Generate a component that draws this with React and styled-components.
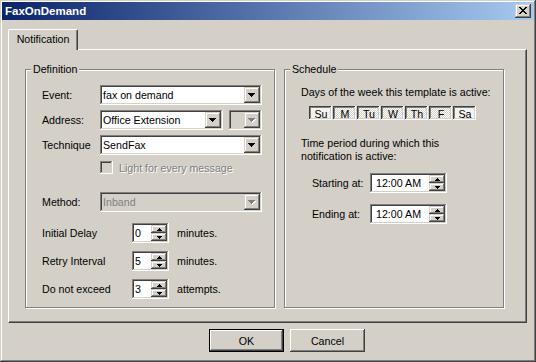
import React from 'react';
import styled, { createGlobalStyle, css } from 'styled-components';

const GlobalStyle = createGlobalStyle`
  html, body { margin: 0; padding: 0; background: #d4d0c8; }
  body {
    font-family: "Liberation Sans", Arial, sans-serif;
    font-size: 8pt;
    color: #000;
  }
  * { box-sizing: border-box; }
`;

// classic 3D edges
const raised = css`
  box-shadow: inset -1px -1px #404040, inset 1px 1px #d4d0c8, inset -2px -2px #808080, inset 2px 2px #fff;
`;

const pushRaised = css`
  box-shadow: inset -1px -1px #404040, inset 1px 1px #fff, inset -2px -2px #808080;
`;

const sunken = css`
  box-shadow: inset -1px -1px #fff, inset 1px 1px #808080, inset -2px -2px #d4d0c8, inset 2px 2px #404040;
`;

const Window = styled.div`
  width: 536px;
  height: 362px;
  padding: 2px;
  display: flex;
  flex-direction: column;
  background: #d4d0c8;
  box-shadow: inset -1px -1px #404040, inset 1px 1px #d4d0c8, inset -2px -2px #808080, inset 2px 2px #fff;
`;

const TitleBar = styled.div`
  height: 18px;
  flex-shrink: 0;
  display: flex;
  align-items: center;
  justify-content: space-between;
  padding: 0 3px 0 3px;
  background: linear-gradient(to right, #0a246a, #a6caf0);
`;

const Caption = styled.span`
  color: #fff;
  font-weight: bold;
  font-size: 11.5px;
`;

const CaptionButton = styled.div`
  width: 16px;
  height: 14px;
  background: #d4d0c8;
  display: flex;
  align-items: center;
  justify-content: center;
  padding: 0 1px 1px 0;
  ${raised}
`;

const Body = styled.div`
  flex: 1;
  padding: 9px 7px 0 6px;
  display: flex;
  flex-direction: column;
`;

const TabStrip = styled.div`
  display: flex;
`;

const Tab = styled.div`
  position: relative;
  z-index: 1;
  width: 70px;
  height: 21px;
  margin-bottom: -1px;
  padding-bottom: 2px;
  background: #d4d0c8;
  border-top: 1px solid #fff;
  border-left: 1px solid #fff;
  border-right: 1px solid #404040;
  border-radius: 2px 2px 0 0;
  box-shadow: inset -1px 0 #808080;
  display: flex;
  align-items: center;
  justify-content: center;
`;

const TabPanel = styled.div`
  height: 274px;
  border-top: 1px solid #fff;
  border-left: 1px solid #fff;
  border-right: 1px solid #404040;
  border-bottom: 1px solid #404040;
  box-shadow: inset -1px -1px #808080;
  padding: 19px 0 0 16px;
  display: flex;
  gap: 9px;
  align-items: flex-start;
`;

const GroupBox = styled.div`
  width: ${p => p.$w}px;
  height: 239px;
  border: 1px solid #808080;
  box-shadow: inset 1px 1px #fff, 1px 1px #fff;
  padding: 0 0 0 16px;
  display: flex;
  flex-direction: column;
  align-items: flex-start;
`;

const Legend = styled.div`
  margin: -7px 0 0 -11px;
  padding: 0 2px;
  line-height: 13px;
  background: #d4d0c8;
`;

const Row = styled.div`
  display: flex;
  align-items: center;
  height: ${p => p.$h || 20}px;
  margin-top: ${p => p.$mt}px;
  margin-left: ${p => p.$ml || 0}px;
`;

const Label = styled.span`
  width: ${p => p.$w}px;
  flex-shrink: 0;
  white-space: nowrap;
`;

const Combo = styled.div`
  width: ${p => p.$w}px;
  height: 20px;
  padding: 2px;
  display: flex;
  margin-left: ${p => p.$ml || 0}px;
  background: ${p => (p.$disabled ? '#d4d0c8' : '#fff')};
  ${sunken}
`;

const ComboText = styled.div`
  flex: 1;
  padding-left: 1px;
  line-height: 16px;
  white-space: nowrap;
  overflow: hidden;
  color: ${p => (p.$disabled ? '#808080' : '#000')};
`;

const ArrowButton = styled.div`
  width: 16px;
  height: 16px;
  flex-shrink: 0;
  background: #d4d0c8;
  display: flex;
  align-items: center;
  justify-content: center;
  ${raised}
`;

const CheckBox = styled.div`
  width: 13px;
  height: 13px;
  background: #d4d0c8;
  ${sunken}
`;

const DisabledText = styled.span`
  margin-left: 6px;
  color: #808080;
  text-shadow: 1px 1px #fff;
`;

const SpinBox = styled.div`
  width: ${p => p.$w}px;
  height: 20px;
  padding: 2px;
  display: flex;
  background: #fff;
  ${sunken}
`;

const SpinValue = styled.div`
  flex: 1;
  padding-left: ${p => p.$pad || 1}px;
  line-height: 16px;
  white-space: nowrap;
`;

const SpinButtons = styled.div`
  width: 16px;
  display: flex;
  flex-direction: column;
`;

const SpinHalf = styled.div`
  height: 8px;
  background: #d4d0c8;
  display: flex;
  align-items: center;
  justify-content: center;
  ${raised}
`;

const Unit = styled.span`
  margin-left: 8px;
`;

const Note = styled.div`
  line-height: 13px;
  margin-top: ${p => p.$mt}px;
  max-width: ${p => p.$max || 220}px;
`;

const DayRow = styled.div`
  display: flex;
  gap: 1px;
  margin: 7px 0 0 8px;
`;

const DayToggle = styled.div`
  width: 23px;
  height: 14px;
  display: flex;
  align-items: center;
  justify-content: center;
  padding: 1px 0 0 1px;
  line-height: 12px;
  background: ${p =>
    p.$on
      ? 'repeating-conic-gradient(#fff 0 25%, #d4d0c8 0 50%) 0 0 / 2px 2px'
      : '#f4f3f0'};
  box-shadow: inset -1px -1px #fff, inset 1px 1px #404040, inset -2px -2px #d4d0c8, inset 2px 2px #808080;
`;

const ButtonRow = styled.div`
  display: flex;
  gap: 6px;
  margin-top: 6px;
  padding-left: 201px;
`;

const PushButton = styled.div`
  width: 75px;
  height: 23px;
  display: flex;
  align-items: center;
  justify-content: center;
  background: #d4d0c8;
  ${p =>
    p.$default
      ? css`
          border: 1px solid #000;
          ${pushRaised}
        `
      : pushRaised}
`;

const DownArrow = ({ disabled }) => (
  <svg width="8" height="5" viewBox="0 0 8 5" shapeRendering="crispEdges">
    {disabled && <path d="M1 1h7v1H1zM2 2h5v1H2zM3 3h3v1H3zM4 4h1v1H4z" fill="#fff" />}
    <path d="M0 0h7v1H0zM1 1h5v1H1zM2 2h3v1H2zM3 3h1v1H3z" fill={disabled ? '#808080' : '#000'} />
  </svg>
);

const TinyArrow = ({ up }) => (
  <svg width="5" height="3" viewBox="0 0 5 3" shapeRendering="crispEdges">
    <path d={up ? 'M2 0h1v1H2zM1 1h3v1H1zM0 2h5v1H0z' : 'M0 0h5v1H0zM1 1h3v1H1zM2 2h1v1H2z'} fill="#000" />
  </svg>
);

const CloseGlyph = () => (
  <svg width="8" height="7" viewBox="0 0 8 7" shapeRendering="crispEdges">
    <path
      d="M0 0h2v1H0zM6 0h2v1H6zM1 1h2v1H1zM5 1h2v1H5zM2 2h4v1H2zM3 3h2v1H3zM2 4h4v1H2zM1 5h2v1H1zM5 5h2v1H5zM0 6h2v1H0zM6 6h2v1H6z"
      fill="#000"
    />
  </svg>
);

const Select = ({ value, width, disabled, ml }) => (
  <Combo $w={width} $disabled={disabled} $ml={ml}>
    <ComboText $disabled={disabled}>{value}</ComboText>
    <ArrowButton>
      <DownArrow disabled={disabled} />
    </ArrowButton>
  </Combo>
);

const Spinner = ({ value, width, pad }) => (
  <SpinBox $w={width}>
    <SpinValue $pad={pad}>{value}</SpinValue>
    <SpinButtons>
      <SpinHalf><TinyArrow up /></SpinHalf>
      <SpinHalf><TinyArrow /></SpinHalf>
    </SpinButtons>
  </SpinBox>
);

const days = [
  { d: 'Su', on: false },
  { d: 'M', on: true },
  { d: 'Tu', on: true },
  { d: 'W', on: true },
  { d: 'Th', on: true },
  { d: 'F', on: true },
  { d: 'Sa', on: false },
];

const retries = [
  { label: 'Initial Delay', value: '0', unit: 'minutes.', mt: 11 },
  { label: 'Retry Interval', value: '5', unit: 'minutes.', mt: 8 },
  { label: 'Do not exceed', value: '3', unit: 'attempts.', mt: 8 },
];

export default function App() {
  return (
    <>
      <GlobalStyle />
      <Window>
        <TitleBar>
          <Caption>FaxOnDemand</Caption>
          <CaptionButton>
            <CloseGlyph />
          </CaptionButton>
        </TitleBar>
        <Body>
          <TabStrip>
            <Tab>Notification</Tab>
          </TabStrip>
          <TabPanel>
            <GroupBox $w={250}>
              <Legend>Definition</Legend>
              <Row $mt={9}>
                <Label $w={58}>Event:</Label>
                <Select value="fax on demand" width={162} />
              </Row>
              <Row $mt={5}>
                <Label $w={58}>Address:</Label>
                <Select value="Office Extension" width={123} />
                <Select value="" width={33} disabled ml={6} />
              </Row>
              <Row $mt={5}>
                <Label $w={58}>Technique</Label>
                <Select value="SendFax" width={162} />
              </Row>
              <Row $mt={6} $h={13} $ml={58}>
                <CheckBox />
                <DisabledText>Light for every message</DisabledText>
              </Row>
              <Row $mt={18}>
                <Label $w={58}>Method:</Label>
                <Select value="Inband" width={162} disabled />
              </Row>
              {retries.map(r => (
                <Row key={r.label} $mt={r.mt}>
                  <Label $w={90}>{r.label}</Label>
                  <Spinner value={r.value} width={37} />
                  <Unit>{r.unit}</Unit>
                </Row>
              ))}
            </GroupBox>
            <GroupBox $w={220}>
              <Legend>Schedule</Legend>
              <Note $mt={10}>Days of the week this template is active:</Note>
              <DayRow>
                {days.map(x => (
                  <DayToggle key={x.d} $on={x.on}>{x.d}</DayToggle>
                ))}
              </DayRow>
              <Note $mt={17} $max={180}>Time period during which this notification is active:</Note>
              <Row $mt={10} $ml={11}>
                <Label $w={58}>Starting at:</Label>
                <Spinner value="12:00 AM" width={77} pad={4} />
              </Row>
              <Row $mt={11} $ml={11}>
                <Label $w={58}>Ending at:</Label>
                <Spinner value="12:00 AM" width={77} pad={4} />
              </Row>
            </GroupBox>
          </TabPanel>
          <ButtonRow>
            <PushButton $default>OK</PushButton>
            <PushButton>Cancel</PushButton>
          </ButtonRow>
        </Body>
      </Window>
    </>
  );
}
